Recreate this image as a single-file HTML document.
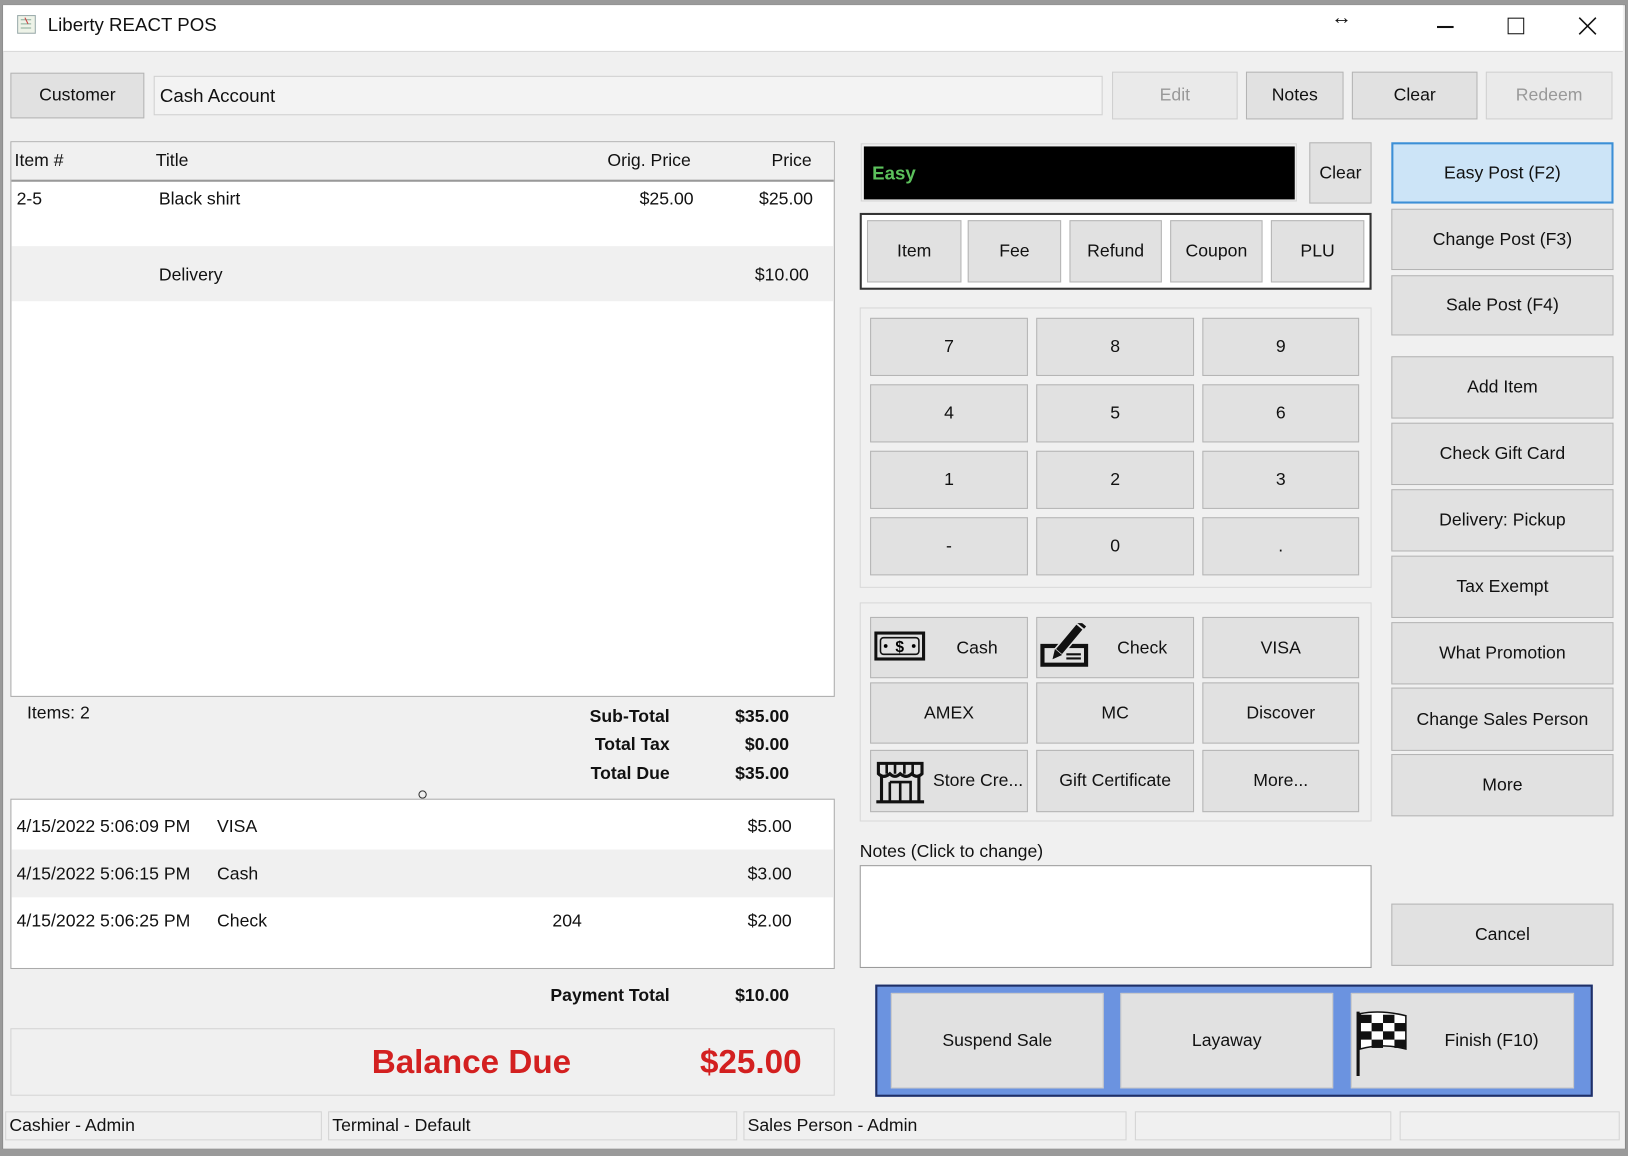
<!DOCTYPE html>
<html><head><meta charset="utf-8">
<style>
html,body{margin:0;padding:0;width:1628px;height:1156px;overflow:hidden;background:#9a9a9a;}
#w{position:absolute;left:0;top:0;width:1568px;height:1113px;transform:scale(1.0383,1.0386);transform-origin:0 0;font-family:"Liberation Sans",sans-serif;font-size:17px;color:#111;}
.win{position:absolute;left:2px;top:4px;width:1562px;height:1101px;background:#f0f0f0;border:1px solid #888;}
.a{position:absolute;}
.b{position:absolute;background:#e1e1e1;border:1px solid #b4b4b4;box-sizing:border-box;display:flex;align-items:center;justify-content:center;font-size:17px;}
.t{position:absolute;white-space:nowrap;}
.r{text-align:right;}
.bold{font-weight:bold;}
.cell{position:absolute;top:1070px;height:28px;border:1px solid #d4d4d4;box-sizing:border-box;padding-left:3px;line-height:26px;font-size:17px;}
</style></head><body>
<div id="w">
<div class="win"></div>
<div class="a" style="left:3px;top:5px;width:1560px;height:44px;background:#fff;border-bottom:1px solid #d8d8d8;"></div>
<svg class="a" style="left:15px;top:13px" width="22" height="22"><rect x="2" y="2" width="17" height="17" fill="#eef3e8" stroke="#9aa" /><path d="M5 6h10M5 10h10M5 14h10" stroke="#8a9" /><path d="M9 4l3 6" stroke="#c44"/></svg>
<div class="t" style="left:46px;top:14px;font-size:18px;">Liberty REACT POS</div>
<div class="t" style="left:1282px;top:6px;font-size:20px;font-weight:bold;">↔</div>
<div class="a" style="left:1384px;top:25px;width:16px;height:1.5px;background:#111"></div>
<div class="a" style="left:1452px;top:17px;width:14px;height:14px;border:1.5px solid #111"></div>
<svg class="a" style="left:1520px;top:16px" width="18" height="18"><path d="M1 1L17 17M17 1L1 17" stroke="#111" stroke-width="1.5"/></svg>

<div class="b" style="left:10px;top:70px;width:129px;height:44px;">Customer</div>
<div class="a" style="left:148px;top:73px;width:914px;height:38px;border:1px solid #d0d0d0;box-sizing:border-box;background:#f3f3f3;"></div>
<div class="t" style="left:154px;top:82px;font-size:18px;">Cash Account</div>
<div class="b" style="left:1071px;top:69px;width:121px;height:46px;color:#999;background:#eaeaea;border-color:#d0d0d0">Edit</div>
<div class="b" style="left:1200px;top:69px;width:94px;height:46px;">Notes</div>
<div class="b" style="left:1302px;top:69px;width:121px;height:46px;">Clear</div>
<div class="b" style="left:1431px;top:69px;width:122px;height:46px;color:#999;background:#eaeaea;border-color:#d0d0d0">Redeem</div>

<div class="a" style="left:10px;top:136px;width:794px;height:535px;border:1px solid #aaa;box-sizing:border-box;background:#fff;"></div>
<div class="a" style="left:11px;top:137px;width:792px;height:36px;background:#f0f0f0;border-bottom:2px solid #999;"></div>
<div class="t" style="left:14px;top:145px;">Item #</div>
<div class="t" style="left:150px;top:145px;">Title</div>
<div class="t" style="left:585px;top:145px;">Orig. Price</div>
<div class="t" style="left:743px;top:145px;">Price</div>
<div class="t" style="left:16px;top:182px;">2-5</div>
<div class="t" style="left:153px;top:182px;">Black shirt</div>
<div class="t" style="left:616px;top:182px;">$25.00</div>
<div class="t" style="left:731px;top:182px;">$25.00</div>
<div class="a" style="left:11px;top:237px;width:792px;height:53px;background:#f0f0f0;"></div>
<div class="t" style="left:153px;top:255px;">Delivery</div>
<div class="t" style="left:727px;top:255px;">$10.00</div>

<div class="t" style="left:26px;top:677px;">Items: 2</div>
<div class="t bold r" style="left:480px;width:165px;top:680px;">Sub-Total</div>
<div class="t bold r" style="left:480px;width:165px;top:707px;">Total Tax</div>
<div class="t bold r" style="left:480px;width:165px;top:735px;">Total Due</div>
<div class="t bold r" style="left:660px;width:100px;top:680px;">$35.00</div>
<div class="t bold r" style="left:660px;width:100px;top:707px;">$0.00</div>
<div class="t bold r" style="left:660px;width:100px;top:735px;">$35.00</div>
<div class="a" style="left:403px;top:761px;width:6px;height:6px;border:1.5px solid #333;border-radius:50%"></div>

<div class="a" style="left:10px;top:769px;width:794px;height:164px;border:1px solid #aaa;box-sizing:border-box;background:#fff;"></div>
<div class="a" style="left:11px;top:818px;width:792px;height:46px;background:#f0f0f0;"></div>
<div class="t" style="left:16px;top:786px;">4/15/2022 5:06:09 PM</div><div class="t" style="left:209px;top:786px;">VISA</div><div class="t" style="left:720px;top:786px;">$5.00</div>
<div class="t" style="left:16px;top:832px;">4/15/2022 5:06:15 PM</div><div class="t" style="left:209px;top:832px;">Cash</div><div class="t" style="left:720px;top:832px;">$3.00</div>
<div class="t" style="left:16px;top:877px;">4/15/2022 5:06:25 PM</div><div class="t" style="left:209px;top:877px;">Check</div><div class="t" style="left:532px;top:877px;">204</div><div class="t" style="left:720px;top:877px;">$2.00</div>

<div class="t bold r" style="left:440px;width:205px;top:949px;">Payment Total</div>
<div class="t bold r" style="left:660px;width:100px;top:949px;">$10.00</div>
<div class="a" style="left:10px;top:990px;width:794px;height:65px;border:1px solid #d4d4d4;box-sizing:border-box;"></div>
<div class="t bold" style="left:358px;top:1004px;font-size:32px;color:#d32020;">Balance Due</div>
<div class="t bold r" style="left:600px;width:172px;top:1004px;font-size:32px;color:#d32020;">$25.00</div>

<div class="cell" style="left:5px;width:305px;">Cashier - Admin</div>
<div class="cell" style="left:316px;width:394px;">Terminal - Default</div>
<div class="cell" style="left:716px;width:369px;">Sales Person - Admin</div>
<div class="cell" style="left:1093px;width:247px;"></div>
<div class="cell" style="left:1348px;width:212px;"></div>

<div class="a" style="left:829px;top:138px;width:420px;height:56px;border:1px solid #d4d4d4;box-sizing:border-box;"></div>
<div class="a" style="left:832px;top:141px;width:415px;height:51px;background:#000;"></div>
<div class="t bold" style="left:840px;top:157px;color:#5cc15c;font-size:18px;">Easy</div>
<div class="b" style="left:1261px;top:137px;width:60px;height:59px;">Clear</div>

<div class="a" style="left:828px;top:205px;width:493px;height:74px;border:2px solid #333;box-sizing:border-box;background:#fff;"></div>
<div class="b" style="left:835px;top:212px;width:91px;height:60px;">Item</div>
<div class="b" style="left:932px;top:212px;width:90px;height:60px;">Fee</div>
<div class="b" style="left:1030px;top:212px;width:89px;height:60px;">Refund</div>
<div class="b" style="left:1127px;top:212px;width:89px;height:60px;">Coupon</div>
<div class="b" style="left:1224px;top:212px;width:90px;height:60px;">PLU</div>

<div class="a" style="left:828px;top:296px;width:493px;height:270px;border:1px solid #d8d8d8;box-sizing:border-box;"></div>
<div class="b" style="left:838px;top:306px;width:152px;height:56px;">7</div>
<div class="b" style="left:998px;top:306px;width:152px;height:56px;">8</div>
<div class="b" style="left:1158px;top:306px;width:151px;height:56px;">9</div>
<div class="b" style="left:838px;top:370px;width:152px;height:56px;">4</div>
<div class="b" style="left:998px;top:370px;width:152px;height:56px;">5</div>
<div class="b" style="left:1158px;top:370px;width:151px;height:56px;">6</div>
<div class="b" style="left:838px;top:434px;width:152px;height:56px;">1</div>
<div class="b" style="left:998px;top:434px;width:152px;height:56px;">2</div>
<div class="b" style="left:1158px;top:434px;width:151px;height:56px;">3</div>
<div class="b" style="left:838px;top:498px;width:152px;height:56px;">-</div>
<div class="b" style="left:998px;top:498px;width:152px;height:56px;">0</div>
<div class="b" style="left:1158px;top:498px;width:151px;height:56px;">.</div>

<div class="a" style="left:828px;top:580px;width:493px;height:211px;border:1px solid #d8d8d8;box-sizing:border-box;"></div>
<div class="b" style="left:838px;top:594px;width:152px;height:59px;"><span style="margin-left:54px">Cash</span></div>
<svg class="a" style="left:842px;top:608px" width="50" height="30"><rect x="1.5" y="1.5" width="46" height="25" fill="none" stroke="#111" stroke-width="3"/><rect x="6" y="6" width="37" height="16" fill="none" stroke="#111" stroke-width="1.5" rx="3"/><text x="24.5" y="20" font-size="15" font-weight="bold" text-anchor="middle" font-family="Liberation Sans">$</text><circle cx="11" cy="14" r="1.8"/><circle cx="38" cy="14" r="1.8"/></svg>
<div class="b" style="left:998px;top:594px;width:152px;height:59px;"><span style="margin-left:52px">Check</span></div>
<svg class="a" style="left:1000px;top:600px" width="54" height="44"><path d="M2 20h46v22H2z" fill="#111"/><rect x="6" y="24" width="38" height="14" fill="#e1e1e1"/><path d="M27 30h14M27 34h14" stroke="#111" stroke-width="2"/><g transform="rotate(40 25 22)"><rect x="20" y="-2" width="9" height="32" fill="#111" stroke="#e1e1e1" stroke-width="1.5"/><path d="M20 30l4.5 9 4.5-9z" fill="#111"/><rect x="20" y="-6" width="9" height="3" fill="#111"/></g></svg>
<div class="b" style="left:1158px;top:594px;width:151px;height:59px;">VISA</div>
<div class="b" style="left:838px;top:657px;width:152px;height:59px;">AMEX</div>
<div class="b" style="left:998px;top:657px;width:152px;height:59px;">MC</div>
<div class="b" style="left:1158px;top:657px;width:151px;height:59px;">Discover</div>
<div class="b" style="left:838px;top:722px;width:152px;height:60px;"><span style="margin-left:56px">Store Cre...</span></div>
<svg class="a" style="left:842px;top:731px" width="50" height="44"><path d="M4 4h42v10q-5 5-10 0q-5 5-11 0q-5 5-10 0q-6 5-11 0z" fill="none" stroke="#111" stroke-width="3"/><path d="M12 4v10M20 4v10M29 4v10M37 4v10" stroke="#111" stroke-width="2.5"/><path d="M7 16v25h36V16M2 41h46" fill="none" stroke="#111" stroke-width="3"/><path d="M15 22h20v19M15 22v19M25 22v19" fill="none" stroke="#111" stroke-width="2.5"/></svg>
<div class="b" style="left:998px;top:722px;width:152px;height:60px;">Gift Certificate</div>
<div class="b" style="left:1158px;top:722px;width:151px;height:60px;">More...</div>

<div class="t" style="left:828px;top:810px;">Notes (Click to change)</div>
<div class="a" style="left:828px;top:833px;width:493px;height:99px;border:1px solid #999;box-sizing:border-box;background:#fff;"></div>

<div class="b" style="left:1340px;top:137px;width:214px;height:59px;background:#cce4f7;border:2px solid #3c8fd6;">Easy Post (F2)</div>
<div class="b" style="left:1340px;top:201px;width:214px;height:59px;">Change Post (F3)</div>
<div class="b" style="left:1340px;top:265px;width:214px;height:58px;">Sale Post (F4)</div>
<div class="b" style="left:1340px;top:343px;width:214px;height:60px;">Add Item</div>
<div class="b" style="left:1340px;top:407px;width:214px;height:60px;">Check Gift Card</div>
<div class="b" style="left:1340px;top:471px;width:214px;height:60px;">Delivery: Pickup</div>
<div class="b" style="left:1340px;top:535px;width:214px;height:60px;">Tax Exempt</div>
<div class="b" style="left:1340px;top:599px;width:214px;height:60px;">What Promotion</div>
<div class="b" style="left:1340px;top:662px;width:214px;height:61px;">Change Sales Person</div>
<div class="b" style="left:1340px;top:726px;width:214px;height:60px;">More</div>
<div class="b" style="left:1340px;top:870px;width:214px;height:60px;">Cancel</div>

<div class="a" style="left:843px;top:948px;width:691px;height:108px;background:#6b93e0;border:2px solid #1f2f66;box-sizing:border-box;"></div>
<div class="b" style="left:858px;top:956px;width:205px;height:92px;border-color:#c8c8c8">Suspend Sale</div>
<div class="b" style="left:1079px;top:956px;width:205px;height:92px;border-color:#c8c8c8">Layaway</div>
<div class="b" style="left:1301px;top:956px;width:215px;height:92px;border-color:#c8c8c8"><span style="margin-left:56px">Finish (F10)</span></div>
<svg class="a" style="left:1304px;top:972px" width="52" height="66"><path d="M4 2v62" stroke="#111" stroke-width="3"/><g fill="#111"><path d="M6 4q20-4 44 2v32q-22-6-44 0z" fill="#fff" stroke="#111" stroke-width="1.5"/><rect x="6" y="5" width="11" height="8"/><rect x="28" y="5" width="11" height="8"/><rect x="17" y="13" width="11" height="8"/><rect x="39" y="13" width="11" height="8"/><rect x="6" y="21" width="11" height="8"/><rect x="28" y="21" width="11" height="8"/><rect x="17" y="29" width="11" height="8"/><rect x="39" y="29" width="11" height="8"/></g></svg>
</div>
</body></html>
